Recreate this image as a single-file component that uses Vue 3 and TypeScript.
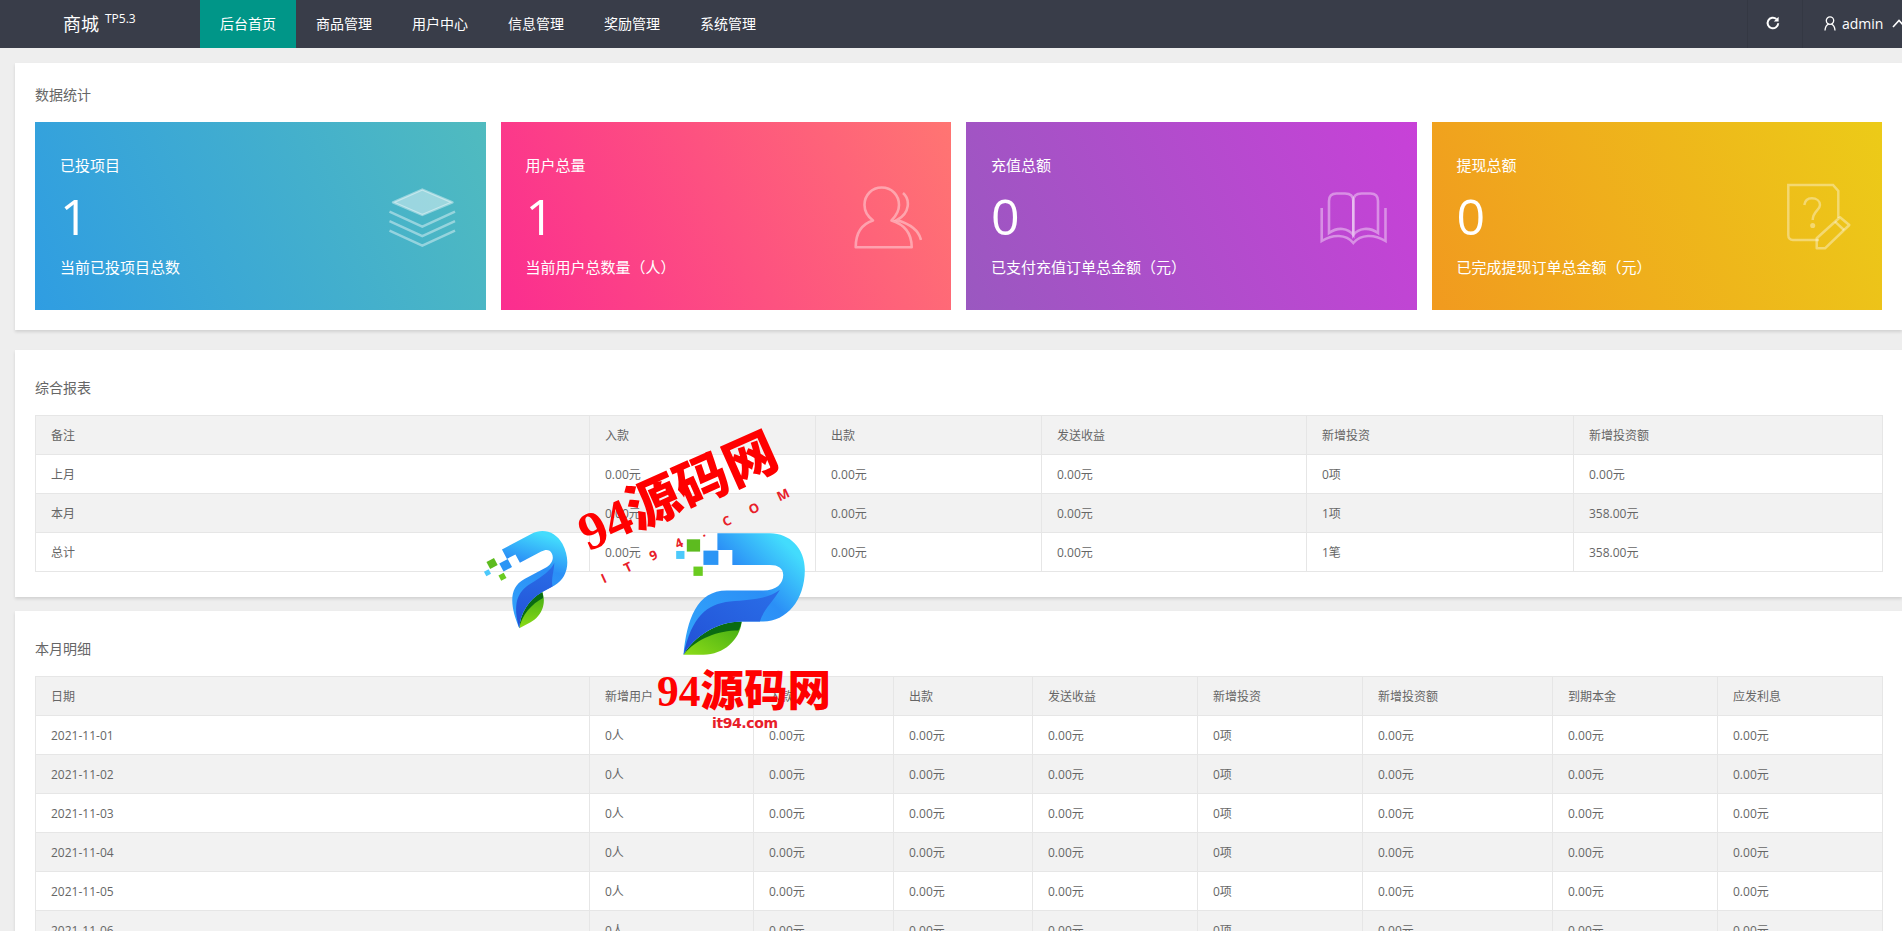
<script setup lang="ts">
interface Tile {
  label: string
  value: string
  note: string
  kind: string
}

const navItems: string[] = ['后台首页', '商品管理', '用户中心', '信息管理', '奖励管理', '系统管理']

const tiles: Tile[] = [
  { label: '已投项目', value: '1', note: '当前已投项目总数', kind: 'blue' },
  { label: '用户总量', value: '1', note: '当前用户总数量（人）', kind: 'pink' },
  { label: '充值总额', value: '0', note: '已支付充值订单总金额（元）', kind: 'purple' },
  { label: '提现总额', value: '0', note: '已完成提现订单总金额（元）', kind: 'orange' }
]

const reportCols: number[] = [554, 226, 226, 265, 267, 309]
const reportHead: string[] = ['备注', '入款', '出款', '发送收益', '新增投资', '新增投资额']
const reportRows: string[][] = [
  ['上月', '0.00元', '0.00元', '0.00元', '0项', '0.00元'],
  ['本月', '0.00元', '0.00元', '0.00元', '1项', '358.00元'],
  ['总计', '0.00元', '0.00元', '0.00元', '1笔', '358.00元']
]

const detailCols: number[] = [554, 164, 140, 139, 165, 165, 190, 165, 165]
const detailHead: string[] = ['日期', '新增用户', '入款', '出款', '发送收益', '新增投资', '新增投资额', '到期本金', '应发利息']
const detailRows: string[][] = [1, 2, 3, 4, 5, 6, 7].map((d) => [
  `2021-11-0${d}`,
  '0人',
  '0.00元',
  '0.00元',
  '0.00元',
  '0项',
  '0.00元',
  '0.00元',
  '0.00元'
])
</script>

<template>
  <div class="page">
    <header class="topbar">
      <div class="logo">商城<span class="logo-ver">TP5.3</span></div>
      <nav class="nav">
        <a v-for="(item, i) in navItems" :key="item" class="nav-item" :class="{ active: i === 0 }">{{ item }}</a>
      </nav>
      <div class="top-right">
        <div class="refresh">
          <svg width="16" height="16" viewBox="0 0 16 16" fill="none">
            <path d="M13.2 8.2A5.3 5.3 0 1 1 11.4 4" stroke="#fff" stroke-width="2" />
            <path d="M13.6 1.8V6.6H8.8Z" fill="#fff" />
          </svg>
        </div>
        <div class="user">
          <svg width="12" height="15" viewBox="0 0 12 15" fill="none" stroke="#fff" stroke-width="1.3">
            <circle cx="6" cy="4.6" r="3.7" />
            <path d="M1 14.5C1.2 11 2.8 9 4.6 8.2M11 14.5C10.8 11 9.2 9 7.4 8.2" />
          </svg>
          <span class="user-name">admin</span>
          <svg class="caret" width="14" height="9" viewBox="0 0 14 9" fill="none" stroke="#fff" stroke-width="1.6">
            <path d="M1 8L7 1.5L13 8" />
          </svg>
        </div>
      </div>
    </header>

    <main class="content">
      <section class="card card-stats">
        <h3 class="card-title">数据统计</h3>
        <div class="tiles">
          <div v-for="t in tiles" :key="t.label" class="tile" :class="t.kind">
            <div class="tile-label">{{ t.label }}</div>
            <div class="tile-value">{{ t.value }}</div>
            <div class="tile-note">{{ t.note }}</div>

            <svg v-if="t.kind === 'blue'" class="tile-icon" viewBox="0 0 70 70" fill="none" stroke="#fff" stroke-opacity=".42" stroke-width="2.4">
              <path d="M35.3 7.5L65.5 20.3L35.3 33L6 20.3Z" fill="#fff" fill-opacity=".45" stroke-linejoin="round" />
              <path d="M2.5 29.7L35.3 44.7L68 29.7" />
              <path d="M2.5 39.2L35.3 54.2L68 39.2" />
              <path d="M2.5 48.7L35.3 63.7L68 48.7" />
            </svg>
            <svg v-if="t.kind === 'pink'" class="tile-icon" viewBox="0 0 70 70" fill="none" stroke="#fff" stroke-opacity=".4" stroke-width="2.6">
              <path d="M21 38.5C15 34 12.5 29 12.5 23C12.5 13 20 5.5 29.7 5.5C39.5 5.5 47 13 47 23C47 29 44 34 39.5 38.5C51 42 59.7 50 59.7 65.3H3.7C3.7 50 10 42 21 38.5Z" stroke-linejoin="round" />
              <path d="M51 11C58 17 58.5 31 45 38C58 42 67 49 69 58" />
            </svg>
            <svg v-if="t.kind === 'purple'" class="tile-icon" viewBox="0 0 70 70" fill="none" stroke="#fff" stroke-opacity=".4" stroke-width="2.6">
              <path d="M11 51V19C11 14 14 11.5 18.5 11.5H27C32 11.5 35.3 14 35.3 19V53C30 46 20 44.5 11 51Z" />
              <path d="M60 51V19C60 14 57 11.5 52.5 11.5H43.5C38.5 11.5 35.3 14 35.3 19V53C40.5 46 51 44.5 60 51Z" />
              <path d="M3.7 26V59C15 52 28 52 35.3 61C43 52 56 52 67.5 59V26" />
            </svg>
            <svg v-if="t.kind === 'orange'" class="tile-icon" viewBox="0 0 70 70" fill="none" stroke="#fff" stroke-opacity=".38" stroke-width="2.5">
              <path d="M36 58H10C7 58 5.3 56 5.3 53V3H50L55.3 9V36" />
              <path d="M21.3 23C22 18.5 25 16.3 28.7 16.3C33.5 16.3 37 19 37 23C37 28 29.7 29.5 29.7 38" />
              <circle cx="29.7" cy="43.5" r="1.3" />
              <path d="M33.7 66.3V56.3L57 35.3L66.3 43L42 66.3Z" stroke-linejoin="round" />
              <path d="M52 39.7L61 48" />
            </svg>
          </div>
        </div>
      </section>

      <section class="card card-table card-report">
        <h3 class="card-title">综合报表</h3>
        <table class="grid">
          <colgroup>
            <col v-for="(w, i) in reportCols" :key="i" :style="{ width: w + 'px' }" />
          </colgroup>
          <thead>
            <tr>
              <th v-for="h in reportHead" :key="h">{{ h }}</th>
            </tr>
          </thead>
          <tbody>
            <tr v-for="row in reportRows" :key="row[0]">
              <td v-for="(c, i) in row" :key="i">{{ c }}</td>
            </tr>
          </tbody>
        </table>
      </section>

      <section class="card card-table card-detail">
        <h3 class="card-title">本月明细</h3>
        <table class="grid">
          <colgroup>
            <col v-for="(w, i) in detailCols" :key="i" :style="{ width: w + 'px' }" />
          </colgroup>
          <thead>
            <tr>
              <th v-for="h in detailHead" :key="h">{{ h }}</th>
            </tr>
          </thead>
          <tbody>
            <tr v-for="row in detailRows" :key="row[0]">
              <td v-for="(c, i) in row" :key="i">{{ c }}</td>
            </tr>
          </tbody>
        </table>
      </section>
    </main>

    <!-- site watermark laid over the page -->
    <div class="wm-text wm-text-top">94源码网</div>
    <div class="wm-url wm-url-top">IT94.COM</div>
    <svg class="wm-logo wm-logo-small" viewBox="600 330 420 385">
      <use href="#wm-p" />
    </svg>
    <svg class="wm-logo wm-logo-big" viewBox="600 330 420 385">
      <defs>
        <linearGradient id="wm-blue" x1="1" y1="0" x2="0" y2="1">
          <stop offset=".12" stop-color="#43dcfd" />
          <stop offset=".42" stop-color="#2b8ff6" />
          <stop offset="1" stop-color="#33a6fb" />
        </linearGradient>
        <linearGradient id="wm-dark" x1="1" y1="0" x2="0" y2="1">
          <stop offset="0" stop-color="#2a6fe8" />
          <stop offset="1" stop-color="#2250d6" />
        </linearGradient>
        <linearGradient id="wm-leaf" x1="0" y1="1" x2="1" y2="0">
          <stop offset="0" stop-color="#8ddc18" />
          <stop offset="1" stop-color="#3faa14" />
        </linearGradient>
        <g id="wm-p">
          <path d="M640 705C680 640 750 605 815 605C810 660 760 705 700 705Z" fill="url(#wm-leaf)" />
          <path d="M640 705C672 650 740 606 815 605C812 618 810 625 805 632C745 632 680 655 640 705Z" fill="#0a6b12" />
          <path d="M742 340H900C960 340 1005 385 1005 450C1005 540 950 605 880 605H815C740 605 672 650 640 705C650 600 680 512 770 512H880C920 512 940 490 940 465C940 445 925 435 900 435H787V390H742Z" fill="url(#wm-blue)" />
          <path d="M640 705C672 650 740 605 815 605H870C880 570 910 545 930 510C900 535 850 540 780 545C710 552 665 590 640 705Z" fill="url(#wm-dark)" />
          <rect x="650" y="358" width="40" height="37" fill="#5dbb1f" />
          <rect x="700" y="392" width="45" height="43" fill="#2b95f5" />
          <rect x="618" y="393" width="25" height="24" fill="#4cc9fb" />
          <rect x="670" y="440" width="28" height="28" fill="#6acb20" />
        </g>
      </defs>
      <use href="#wm-p" />
    </svg>
    <div class="wm-text wm-text-bottom">94源码网</div>
    <div class="wm-url wm-url-bottom">it94.com</div>
  </div>
</template>

<style>
html,
body {
  margin: 0;
  height: 100%;
  overflow: hidden;
  background: #eee;
}
</style>

<style scoped>
.page {
  position: relative;
  height: 931px;
  overflow: hidden;
  background: #eee;
  color: #666;
  font-family: "Open Sans", "Noto Sans CJK SC", sans-serif;
  font-size: 12px;
}

.topbar {
  display: flex;
  height: 48px;
  background: #393d49;
  color: #fff;
  font-size: 14px;
}

.logo {
  width: 200px;
  padding-left: 63px;
  box-sizing: border-box;
  font-size: 18px;
  line-height: 48px;
}

.logo-ver {
  margin-left: 6px;
  font-size: 12px;
  position: relative;
  top: -8px;
}

.nav {
  display: flex;
}

.nav-item {
  width: 96px;
  text-align: center;
  line-height: 48px;
}

.nav-item.active {
  background: #009688;
}

.top-right {
  display: flex;
  margin-left: auto;
}

.refresh {
  display: flex;
  align-items: center;
  justify-content: center;
  width: 56px;
  padding-bottom: 2px;
  padding-right: 5px;
  box-sizing: border-box;
  border-left: 1px solid #343843;
  border-right: 1px solid #343843;
}

.user {
  display: flex;
  align-items: center;
  width: 99px;
  padding-left: 21px;
  padding-bottom: 2px;
  box-sizing: border-box;
  overflow: hidden;
}

.user svg {
  flex-shrink: 0;
}

.user-name {
  margin-left: 6px;
}

.caret {
  margin-left: 9px;
}

.content {
  padding: 15px 0 0 15px;
}

.card {
  background: #fff;
  padding: 20px;
  box-shadow: 0 2px 3px rgba(0, 0, 0, 0.12);
}

.card-title {
  margin: 0 0 15px;
  font-size: 14px;
  font-weight: 400;
  line-height: 24px;
  color: #666;
}

.card-table {
  padding: 26px 20px 25px;
}

.card-report {
  margin-top: 20px;
}

.card-detail {
  margin-top: 14px;
}

.tiles {
  display: grid;
  grid-template-columns: repeat(4, 1fr);
  gap: 15px;
}

.tile {
  position: relative;
  height: 188px;
  padding: 31px 25px 0;
  box-sizing: border-box;
  color: #fff;
}

.tile.blue {
  background: linear-gradient(65deg, #2f9de2, #50bbbf);
}

.tile.pink {
  background: linear-gradient(65deg, #fb2d8f, #ff7572);
}

.tile.purple {
  background: linear-gradient(65deg, #9a58c0, #c841d8);
}

.tile.orange {
  background: linear-gradient(65deg, #f19a1f, #eccb18);
}

.tile-label,
.tile-note {
  font-size: 15px;
  line-height: 24px;
}

.tile-value {
  margin: 9px 0 9px;
  font-size: 50px;
  font-weight: 400;
  line-height: 60px;
}

.tile-icon {
  position: absolute;
  right: 29px;
  top: 60px;
  width: 70px;
  height: 70px;
}

.grid {
  width: 100%;
  table-layout: fixed;
  border-collapse: collapse;
  color: #666;
}

.grid th,
.grid td {
  height: 37px;
  padding: 1px 15px 0;
  border: 1px solid #e6e6e6;
  font-size: 12px;
  font-weight: 400;
  line-height: 20px;
  text-align: left;
  box-sizing: content-box;
}

.grid th {
  background: #f2f2f2;
}

.grid tbody tr:nth-child(even) {
  background: #f2f2f2;
}

.wm-text {
  position: absolute;
  color: #f00;
  font-family: "Liberation Serif", "Noto Sans CJK SC", serif;
  font-weight: 900;
  white-space: nowrap;
}

.wm-text-top {
  left: 572px;
  top: 460px;
  font-size: 53px;
  line-height: 64px;
  transform: rotate(-24deg);
}

.wm-text-bottom {
  left: 657px;
  top: 667px;
  font-size: 43.5px;
  line-height: 48px;
}

.wm-url {
  position: absolute;
  color: #e8202a;
  font-weight: 700;
  white-space: nowrap;
}

.wm-url-top {
  left: 591px;
  top: 523px;
  font-size: 13px;
  line-height: 16px;
  letter-spacing: 20.7px;
  transform: rotate(-25deg);
}

.wm-url-bottom {
  left: 712px;
  top: 715px;
  font-size: 14px;
  line-height: 16px;
  font-family: "DejaVu Sans", sans-serif;
  letter-spacing: -0.4px;
}

.wm-logo {
  position: absolute;
}

.wm-logo-big {
  left: 670px;
  top: 530px;
  width: 140px;
  height: 128px;
}

.wm-logo-small {
  left: 488px;
  top: 536px;
  width: 90px;
  height: 82px;
  transform: rotate(-28deg);
}
</style>
